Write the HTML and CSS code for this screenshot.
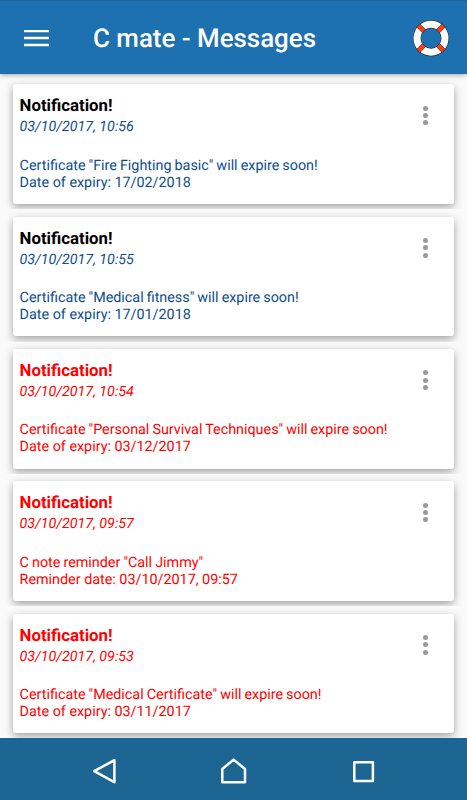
FILE: index.html
```html
<!DOCTYPE html>
<html lang="en">
<head>
    <meta charset="UTF-8">
    <title>C mate - Messages</title>
    <link rel="stylesheet" href="styles.css">
</head>
<body>

<div class="app">
    <header class="toolbar">
        <svg class="menu" width="26" height="18" viewBox="0 0 26 18">
            <path d="M0 1.1h25M0 8.1h25M0 15h25" stroke="#fff" stroke-width="2.5"/>
        </svg>
        <h1>C mate - Messages</h1>
        <svg class="help" width="38" height="38" viewBox="-19 -18.2 38 38">
            <circle r="14" fill="none" stroke="#15223c" stroke-width="8"/>
            <circle r="14" fill="none" stroke="#fff" stroke-width="7"/>
            <g fill="#ff3c0a" stroke="#15223c" stroke-width=".6">
                <rect x="9.8" y="-2.2" width="8.2" height="4.4" transform="rotate(45)"/>
                <rect x="9.8" y="-2.2" width="8.2" height="4.4" transform="rotate(135)"/>
                <rect x="9.8" y="-2.2" width="8.2" height="4.4" transform="rotate(225)"/>
                <rect x="9.8" y="-2.2" width="8.2" height="4.4" transform="rotate(315)"/>
            </g>
        </svg>
    </header>

    <main class="messages">
        <div class="item">
            <div class="card">
                <div class="text">
                    <h2>Notification!</h2>
                    <p class="date">03/10/2017, 10:56</p>
                    <p class="subject">Certificate "Fire Fighting basic" will expire soon!</p>
                    <p>Date of expiry: 17/02/2018</p>
                </div>
                <div class="more"><i></i><i></i><i></i></div>
            </div>
        </div>
        <div class="item">
            <div class="card">
                <div class="text">
                    <h2>Notification!</h2>
                    <p class="date">03/10/2017, 10:55</p>
                    <p class="subject">Certificate "Medical fitness" will expire soon!</p>
                    <p>Date of expiry: 17/01/2018</p>
                </div>
                <div class="more"><i></i><i></i><i></i></div>
            </div>
        </div>
        <div class="item">
            <div class="card unread">
                <div class="text">
                    <h2>Notification!</h2>
                    <p class="date">03/10/2017, 10:54</p>
                    <p class="subject">Certificate "Personal Survival Techniques" will expire soon!</p>
                    <p>Date of expiry: 03/12/2017</p>
                </div>
                <div class="more"><i></i><i></i><i></i></div>
            </div>
        </div>
        <div class="item">
            <div class="card unread">
                <div class="text">
                    <h2>Notification!</h2>
                    <p class="date">03/10/2017, 09:57</p>
                    <p class="subject">C note reminder "Call Jimmy"</p>
                    <p>Reminder date: 03/10/2017, 09:57</p>
                </div>
                <div class="more"><i></i><i></i><i></i></div>
            </div>
        </div>
        <div class="item">
            <div class="card unread">
                <div class="text">
                    <h2>Notification!</h2>
                    <p class="date">03/10/2017, 09:53</p>
                    <p class="subject">Certificate "Medical Certificate" will expire soon!</p>
                    <p>Date of expiry: 03/11/2017</p>
                </div>
                <div class="more"><i></i><i></i><i></i></div>
            </div>
        </div>
    </main>

    <nav class="navbar">
        <svg width="26" height="28" viewBox="0 0 26 28">
            <path d="M23.4 3.2v22L3.2 14.2z"/>
        </svg>
        <svg width="26" height="28" viewBox="0 0 26 28">
            <path d="M1.3 25.3V12L12.6 2.6 24 12v13.3z"/>
        </svg>
        <svg width="26" height="28" viewBox="0 0 26 28">
            <path d="M3.3 5.3h18.6v18.6H3.3z"/>
        </svg>
    </nav>
</div>

</body>
</html>
```

FILE: styles.css
```css
* {
    margin: 0;
    padding: 0;
    box-sizing: border-box;
}
body {
    font-family: Roboto, "Liberation Sans", sans-serif;
    background: #fafafa;
    text-rendering: geometricPrecision;
}
.app {
    height: 800px;
    display: flex;
    flex-direction: column;
    overflow: hidden;
}

/* top bar */
.toolbar {
    height: 74px;
    flex: none;
    display: flex;
    align-items: center;
    padding: 2px 17px 0 24px;
    background: #1d71b0;
    border-top: 1px solid #1d6594;
    box-shadow: 0 1px 5px rgba(0, 0, 0, .35);
    position: relative;
    z-index: 1;
}
.toolbar h1 {
    flex: 1;
    margin-left: 43px;
    color: #fff;
    font-size: 25.9px;
    font-weight: 500;
    line-height: 32px;
    white-space: nowrap;
}

/* message list */
.messages {
    flex: 1;
    min-height: 0;
    padding-top: 3px;
    overflow: hidden;
}
.item {
    height: 132.35px;
    padding: 7.3px 13px 5px;
    overflow: hidden;
}
.card {
    height: 119.6px;
    display: flex;
    justify-content: space-between;
    padding: 12.1px 26px 0 6.6px;
    background: #fff;
    border-radius: 3px;
    box-shadow: 0 3px 8px rgba(0, 0, 0, .36);
    color: #0e4d8c;
    font-size: 14.35px;
    line-height: 17px;
    white-space: nowrap;
}
.card h2 {
    color: #000;
    font-size: 16.8px;
    font-weight: 700;
    line-height: 21px;
}
.card .date {
    font-style: italic;
    font-size: 14.25px;
    line-height: 21px;
    margin-bottom: 18.35px;
}
.card .subject {
    word-spacing: -.5px;
}
.card.unread,
.card.unread h2 {
    color: #f00;
}
.more {
    display: flex;
    flex-direction: column;
    gap: 2.4px;
    padding-top: 9.2px;
}
.more i {
    width: 5px;
    height: 5px;
    border-radius: 50%;
    background: #999;
}

/* system buttons */
.navbar {
    height: 62px;
    flex: none;
    display: flex;
    justify-content: center;
    gap: 104px;
    padding-top: 19px;
    background: #1d6593;
}
.navbar path {
    fill: none;
    stroke: #fff;
    stroke-width: 2.5;
    stroke-linejoin: round;
}
```
